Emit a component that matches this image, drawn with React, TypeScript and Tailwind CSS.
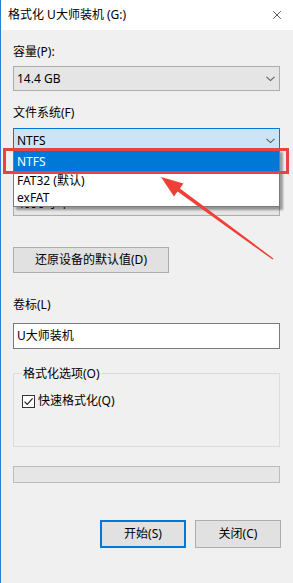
import { X } from 'lucide-react'

function Chevron() {
  return (
    <svg width="9" height="6" viewBox="0 0 9 6" className="shrink-0">
      <path d="M0.5 0.8 L4.5 4.6 L8.5 0.8" fill="none" stroke="#5a5a5a" strokeWidth="1.1" />
    </svg>
  )
}

function Combo({ value, focused }: { value: string; focused?: boolean }) {
  return (
    <div
      className={
        focused
          ? 'flex h-[25px] items-center justify-between border border-[#0078d7] bg-[#cce4f7] pl-[3px] pr-[4px]'
          : 'flex h-[25px] items-center justify-between border border-[#adadad] bg-[#e5e5e5] pl-[3px] pr-[4px]'
      }
    >
      <span className="leading-[16px]">{value}</span>
      <Chevron />
    </div>
  )
}

export default function App() {
  return (
    <div className="relative h-[583px] w-[293px] overflow-hidden border-l border-[#2b7bd3] bg-[#f0f0f0] font-['Noto_Sans','Noto_Sans_CJK_SC',sans-serif] text-[12px] text-black">
      <div className="flex h-[30px] items-center justify-between bg-white pl-[7px] pr-[9px]">
        <span className="leading-[16px]">格式化 U大师装机 (G:)</span>
        <X className="h-[14px] w-[14px] text-[#222]" strokeWidth={1.3} />
      </div>

      <div className="pl-[12px] pr-[13px] pt-[14px]">
        <div className="leading-[16px]">容量(P):</div>
        <div className="mt-[6px]">
          <Combo value="14.4 GB" />
        </div>

        <div className="mt-[14px] leading-[16px]">文件系统(F)</div>
        <div className="mt-[7px]">
          <Combo value="NTFS" focused />
        </div>

        {/* hidden under the open list */}
        <div className="mt-[14px] h-[16px]" />
        <div className="mt-[8px]">
          <Combo value="4096 字节" />
        </div>

        <button className="mt-[31px] flex h-[26px] w-[156px] items-center justify-center border border-[#adadad] bg-[#e1e1e1]">
          还原设备的默认值(D)
        </button>

        <div className="mt-[24px] leading-[16px]">卷标(L)</div>
        <div className="mt-[10px] flex h-[26px] items-center border border-[#7a7a7a] bg-white pl-[3px]">
          U大师装机
        </div>

        <div className="mt-[24px] h-[74px] border border-[#dcdcdc] pl-[8px]">
          <div className="-mt-[8px] w-fit bg-[#f0f0f0] px-[1px] leading-[16px]">格式化选项(O)</div>
          <div className="mt-[11px] flex items-center gap-[3px]">
            <div className="flex h-[13px] w-[13px] items-center justify-center border border-[#333] bg-white">
              <svg width="11" height="11" viewBox="0 0 11 11">
                <path d="M1.5 5.6 L4.3 8.4 L9.6 2.4" fill="none" stroke="#222" strokeWidth="1.2" />
              </svg>
            </div>
            <span className="leading-[16px]">快速格式化(Q)</span>
          </div>
        </div>

        <div className="mt-[19px] h-[17px] border border-[#bcbcbc] bg-[#e6e6e6]" />

        <div className="-mr-[1px] mt-[37px] flex justify-end gap-[9px]">
          <button className="flex h-[28px] w-[86px] items-center justify-center border-2 border-[#0078d7] bg-[#e1e1e1]">
            开始(S)
          </button>
          <button className="flex h-[28px] w-[86px] items-center justify-center border border-[#adadad] bg-[#e1e1e1]">
            关闭(C)
          </button>
        </div>
      </div>

      {/* open dropdown list */}
      <div className="absolute left-[12px] top-[149px] w-[267px] border border-[#7a7a7a] bg-white pt-[1px] shadow-[3px_3px_2px_rgba(0,0,0,0.35)]">
        <div className="flex h-[21px] items-center bg-[#0078d7] pl-[3px] text-white">NTFS</div>
        <div className="flex h-[18px] items-center pl-[3px]">FAT32 (默认)</div>
        <div className="flex h-[16px] items-center pl-[3px]">exFAT</div>
      </div>

      {/* annotation */}
      <div className="absolute left-[2px] top-[148px] h-[26px] w-[286px] border-[3px] border-[#e84341]" />
      <svg className="pointer-events-none absolute left-0 top-0" width="293" height="583" viewBox="0 0 293 583">
        <polygon points="160,177 182.4,183.6 178.9,188.4 272.4,258.4 271.6,259.6 176.5,191.6 173,196.4" fill="#ef4035" />
      </svg>
    </div>
  )
}
